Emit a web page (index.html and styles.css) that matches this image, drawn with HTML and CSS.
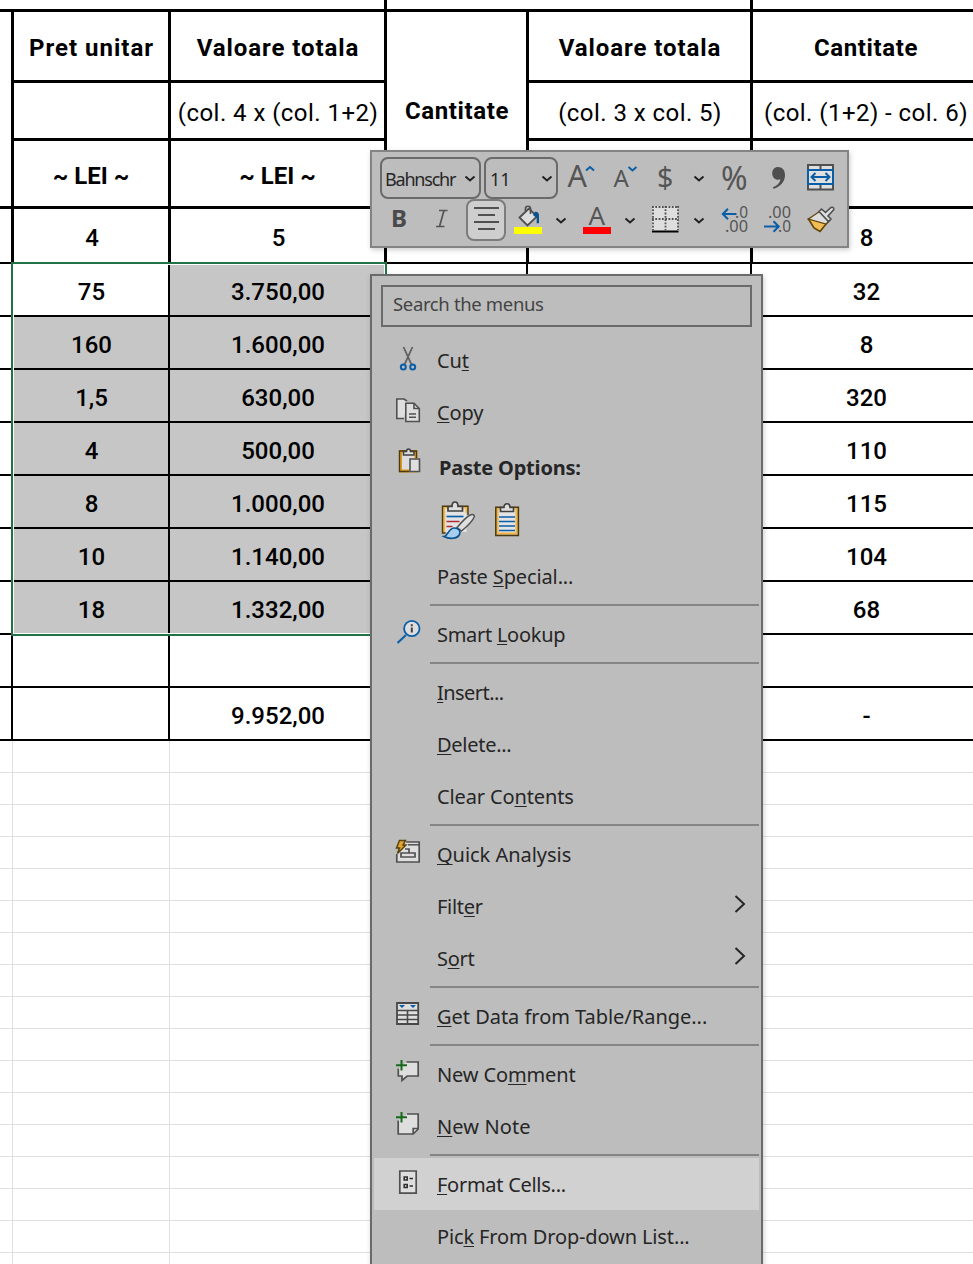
FILE: index.html
```html
<!DOCTYPE html>
<html lang="ro">
<head>
<meta charset="utf-8">
<title>Inventar</title>
<link rel="stylesheet" href="styles.css">
</head>
<body>
<main class="sheet">
  <section class="head">
    <div class="cell span3"></div><div class="cell span2"></div><div class="cell"></div>

    <div class="cell tall"></div>
    <div class="cell bold pret">Pret unitar</div>
    <div class="cell bold">Valoare totala</div>
    <div class="cell bold tall cant">Cantitate</div>
    <div class="cell bold">Valoare totala</div>
    <div class="cell bold cant">Cantitate</div>

    <div class="cell"></div><div class="cell formula">(col. 4 x (col. 1+2)</div><div class="cell formula">(col. 3 x col. 5)</div><div class="cell formula">(col. (1+2) - col. 6)</div>

    <div class="cell lei">~ LEI ~</div><div class="cell lei">~ LEI ~</div><div class="cell"></div><div class="cell"></div>

    <div class="cell thin"></div><div class="cell thin">4</div><div class="cell thin">5</div><div class="cell thin"></div><div class="cell thin"></div><div class="cell thin">8</div>
  </section>
  <section class="body">
    <div class="cell"></div><div class="cell">75</div><div class="cell sel">3.750,00</div><div class="cell"></div><div class="cell"></div><div class="cell">32</div>
    <div class="cell"></div><div class="cell sel">160</div><div class="cell sel">1.600,00</div><div class="cell"></div><div class="cell"></div><div class="cell">8</div>
    <div class="cell"></div><div class="cell sel">1,5</div><div class="cell sel">630,00</div><div class="cell"></div><div class="cell"></div><div class="cell">320</div>
    <div class="cell"></div><div class="cell sel">4</div><div class="cell sel">500,00</div><div class="cell"></div><div class="cell"></div><div class="cell">110</div>
    <div class="cell"></div><div class="cell sel">8</div><div class="cell sel">1.000,00</div><div class="cell"></div><div class="cell"></div><div class="cell">115</div>
    <div class="cell"></div><div class="cell sel">10</div><div class="cell sel">1.140,00</div><div class="cell"></div><div class="cell"></div><div class="cell">104</div>
    <div class="cell"></div><div class="cell sel">18</div><div class="cell sel">1.332,00</div><div class="cell"></div><div class="cell"></div><div class="cell">68</div>
    <div class="cell"></div><div class="cell"></div><div class="cell"></div><div class="cell"></div><div class="cell"></div><div class="cell"></div>
    <div class="cell"></div><div class="cell"></div><div class="cell">9.952,00</div><div class="cell"></div><div class="cell"></div><div class="cell">-</div>
  </section>
  <section class="empty"></section>
  <div class="selection"></div>
</main>

<div class="toolbar">
  <div class="row">
    <div class="combo font"><span>Bahnschr</span><svg class="chev" width="12" height="8" viewBox="0 0 12 8"><path d="M1.500 1.500 6 5.500 10.500 1.500"/></svg></div>
    <div class="combo size"><span>11</span><svg class="chev" width="12" height="8" viewBox="0 0 12 8"><path d="M1.500 1.500 6 5.500 10.500 1.500"/></svg></div>
    <svg width="46" height="42" viewBox="558 157 46 42"><text class="glyph" x="567.500" y="187" font-size="30.500">A</text><path class="blue" d="M586 170.500 590 167l4 3.500"/></svg>
    <svg width="42" height="42" viewBox="604 157 42 42"><text class="glyph" x="613.500" y="187" font-size="24">A</text><path class="blue" d="M628.500 167l4 3.500 4-3.500"/></svg>
    <svg width="40" height="42" viewBox="646 157 40 42"><text class="glyph" x="657" y="188" font-size="28.500">$</text></svg>
    <svg class="chev" width="26" height="42" viewBox="686 157 26 42"><path d="M694.500 176.500l4.500 4 4.500-4"/></svg>
    <svg width="44" height="42" viewBox="712 157 44 42"><text class="glyph" x="721" y="189.500" font-size="32">%</text></svg>
    <svg width="44" height="42" viewBox="756 157 44 42"><path fill="#4f4f4f" d="M778 167c4.300 0 7 3 7 8 0 6.500-4.600 12-11.500 13.800l-.7-1.500c4-1.600 7-4.300 7.700-8.100-4.400 1.700-8.300-1.500-8.300-5.800 0-3.700 2.500-6.400 5.800-6.400z"/></svg>
    <svg width="41" height="42" viewBox="800 157 41 42"><path d="M808 165h25v24.500h-25zM820.500 165v24.500" fill="#dedede" stroke="#505050" stroke-width="2"/><path d="M808 170h25v14h-25z" fill="#e0e0e0" stroke="#0a5ea8" stroke-width="2"/><path class="blue" d="M812 177h17M815.500 173l-4 4 4 4M825.500 173l4 4-4 4"/></svg>
  </div>
  <div class="row">
    <svg width="40" height="42" viewBox="380 199 40 42"><text x="391" y="227" font-size="24" font-weight="700" fill="#4a4a4a">B</text></svg>
    <svg width="46" height="42" viewBox="420 199 46 42"><path d="M439 210.500h8.500M436 226.500h8.500M444 210.500l-4.500 16" fill="none" stroke="#555" stroke-width="1.700"/></svg>
    <div class="align"><i></i><i class="s"></i><i></i><i class="s"></i></div>
    <svg width="44" height="42" viewBox="506 199 44 42"><path d="M519.500 217.500 529 208.500l8 8-9.500 9z" fill="#dedede" stroke="#505050" stroke-width="1.800"/><path d="M525.500 211.500v-3c0-3 5-3 5 0v5.500" fill="none" stroke="#505050" stroke-width="1.700"/><path d="M533 215l2-3.200c2.500-.4 4 1 4 4v7.500h-2.300v-5z" fill="#08528f"/><path fill="#ff0" d="M514 227h28v7h-28z"/></svg>
    <svg class="chev" width="22" height="42" viewBox="550 199 22 42"><path d="M556.500 218.500l4.500 4 4.500-4"/></svg>
    <svg width="48" height="42" viewBox="572 199 48 42"><text class="glyph" x="588.500" y="225" font-size="26">A</text><path fill="red" d="M583 227h28v7h-28z"/></svg>
    <svg class="chev" width="20" height="42" viewBox="620 199 20 42"><path d="M625.500 218.500l4.500 4 4.500-4"/></svg>
    <svg width="50" height="42" viewBox="640 199 50 42"><path fill="#dedede" d="M652 206h26v26h-26z"/><path d="M652 207h27M652 219h27M653 206v24M665.500 206v24M678 206v24" fill="none" stroke="#505050" stroke-width="1.800" stroke-dasharray="1.800 1.500"/><path d="M652 231.500h26.500" stroke="#000" stroke-width="2"/></svg>
    <svg class="chev" width="20" height="42" viewBox="690 199 20 42"><path d="M694.500 218.500l4.500 4 4.500-4"/></svg>
    <svg width="46" height="42" viewBox="710 199 46 42"><text class="num" x="735" y="218" textLength="13" lengthAdjust="spacingAndGlyphs">.0</text><text class="num" x="725" y="232" textLength="23" lengthAdjust="spacingAndGlyphs">.00</text><path class="blue" d="M736.500 214H723M728 208.800l-5.200 5.200 5.200 5.200"/></svg>
    <svg width="44" height="42" viewBox="756 199 44 42"><text class="num" x="768" y="218" textLength="23" lengthAdjust="spacingAndGlyphs">.00</text><text class="num" x="778" y="232" textLength="13" lengthAdjust="spacingAndGlyphs">.0</text><path class="blue" d="M764 226.500h14M773.500 221.300l5.200 5.200-5.200 5.200"/></svg>
    <svg width="41" height="42" viewBox="800 199 41 42"><path d="M808.500 219 814 228l6 3.500 8.500-10.500-6.500-6.500z" fill="#f2bd54" stroke="#604408" stroke-width="1.600"/><path d="M808.500 219 819.500 211.500 829.500 220.500 826 224z" fill="#dedede" stroke="#604408" stroke-width="1.300"/><path d="M819 211.500l2.500-2.500 4 3.500 5.500-5c2-1 3.500 1 2.500 2.500l-5.500 6 3 3-2.500 2.500z" fill="#dedede" stroke="#505050" stroke-width="1.600"/></svg>
  </div>
</div>

<div class="menu">
  <div class="search">Search the menus</div>
  <div class="item"><svg width="56" height="52" viewBox="374 334 56 52"><path d="M403.500 347l8 17.500M412.500 347l-8 17.500" stroke="#606060" stroke-width="1.800"/><g fill="none" stroke="#0a5ea8" stroke-width="2"><circle cx="403.300" cy="367" r="2.500"/><circle cx="412.700" cy="367" r="2.500"/></g></svg><span>Cu<u>t</u></span></div>
  <div class="item"><svg width="56" height="52" viewBox="374 386 56 52"><g fill="#dedede" stroke="#505050" stroke-width="1.600"><path d="M404 418.500h-7.200V399H404l3 2"/><path d="M405.800 403.200h8.200l5.300 5.300v13h-13.500z"/><path d="M414 403.200v5.300h5.300M409 414h7M409 417.200h7" fill="none"/></g></svg><span><u>C</u>opy</span></div>
  <div class="item title"><svg width="56" height="58" viewBox="374 438 56 58"><path d="M400.500 451.500h15.500v19.500h-15.500z" fill="#dedede" stroke="#d99b24" stroke-width="3"/><path d="M409 471.500h-9.500V451h17v7" fill="none" stroke="#4b390f" stroke-width="1.400"/><path d="M403.500 455v-3.500h3c0-3.500 4-3.500 4 0h3.500v3.500z" fill="#dedede" stroke="#404040" stroke-width="1.500"/><path d="M410 459h9.500v12.500H410z" fill="#dedede" stroke="#505050" stroke-width="1.600"/></svg><span>Paste Options:</span></div>
  <div class="pastes">
    <svg width="36" height="54" viewBox="440 496 36 54"><path d="M444 507.500h22.500V532H444z" fill="#e3e3e3"/><path d="M466.500 513v-5.500H444V533" fill="none" stroke="#f2b544" stroke-width="2.200"/><path d="M468 515v-8.800h-25.500V533h3" fill="none" stroke="#4b390f" stroke-width="1.400"/><path d="M448 511v-4.500h4c0-6 6-6 6 0h4.500v4.500z" fill="#dedede" stroke="#404040" stroke-width="1.700"/><path d="M446.500 516.500h17" stroke="#0a5ea8" stroke-width="1.700"/><path d="M446.500 521.500h13M446.500 526.500h6" stroke="#b12a34" stroke-width="1.700"/><path d="M457 527.500c5-6 10-11.500 14-12.800 2.500-.8 4 .8 3 2.800-2 4-7 9-12.500 13.500z" fill="#dedede" stroke="#505050" stroke-width="1.500"/><path d="M444 536.500c4.500-.5 4-8 10-8.500 4.500-.3 7 3 5.500 6.500-2.500 4.500-10 5-15.500 2z" fill="#a9cff0" stroke="#08528f" stroke-width="1.600"/></svg>
    <svg width="26" height="54" viewBox="494 496 26 54"><path d="M497.500 508.500h19v25h-19z" fill="#e3e3e3" stroke="#f2b544" stroke-width="2.200"/><path d="M495.800 507.200h22.600v28.200h-22.600z" fill="none" stroke="#4b390f" stroke-width="1.500"/><path d="M500.500 511.500v-4h3.500c0-5 6-5 6 0h3.500v4z" fill="#dedede" stroke="#404040" stroke-width="1.600"/><path d="M499 517h16M499 521.500h16M499 526h16M499 530.500h16" stroke="#0a5ea8" stroke-width="1.600"/></svg>
  </div>
  <div class="item noicon"><span>Paste <u>S</u>pecial...</span></div>
  <div class="sep"></div>
  <div class="item"><svg width="56" height="52" viewBox="374 608 56 52"><path d="M406 635l-8.500 8" stroke="#0a5ea8" stroke-width="2"/><circle cx="411.800" cy="628.500" r="7.700" fill="#dedede" stroke="#0a5ea8" stroke-width="1.800"/><path d="M411.800 624.300v2M411.800 627.500v5" stroke="#404040" stroke-width="2"/></svg><span class="tight">Smart <u>L</u>ookup</span></div>
  <div class="sep"></div>
  <div class="item noicon"><span class="tighter"><u>I</u>nsert...</span></div>
  <div class="item noicon"><span class="tight"><u>D</u>elete...</span></div>
  <div class="item noicon"><span>Clear Co<u>n</u>tents</span></div>
  <div class="sep"></div>
  <div class="item"><svg width="56" height="52" viewBox="374 828 56 52"><path d="M396.800 854v8h22.400v-20h-13" fill="#dedede" stroke="#505050" stroke-width="1.700"/><path d="M408 844.800h11" stroke="#505050" stroke-width="1.500"/><path d="M401 853h14v4h-14zM405 849h4v4" fill="#dedede" stroke="#505050" stroke-width="1.700"/><path d="M399.500 840.500h6l-2.500 4.500h3l-8.500 8.500 2-5.500h-3z" fill="#e2a52d" stroke="#5a430d" stroke-width="1.500"/></svg><span class="wide"><u>Q</u>uick Analysis</span></div>
  <div class="item noicon"><span class="tight">Filt<u>e</u>r</span><svg class="arrow" width="12" height="18" viewBox="0 0 12 18"><path d="M1.500 1 10 9l-8.500 8"/></svg></div>
  <div class="item noicon"><span class="tight">S<u>o</u>rt</span><svg class="arrow" width="12" height="18" viewBox="0 0 12 18"><path d="M1.500 1 10 9l-8.500 8"/></svg></div>
  <div class="sep"></div>
  <div class="item"><svg width="56" height="52" viewBox="374 990 56 52"><path d="M397 1003h21.200v21H397z" fill="#dedede" stroke="#484848" stroke-width="1.800"/><path d="M397 1010.500h21M397 1015h21M397 1019.500h21M407.500 1010.500V1024" stroke="#484848" stroke-width="1.600"/><path d="M399 1005h6l-3 3zM410 1005h6l-3 3z" fill="#0a5ea8"/></svg><span class="wide"><u>G</u>et Data from Table/Range...</span></div>
  <div class="sep"></div>
  <div class="item"><svg width="56" height="52" viewBox="374 1048 56 52"><path d="M406.500 1062h11.700v14h-11l-5.200 4.500V1076h-3.700v-7.500" fill="#dedede" stroke="#505050" stroke-width="1.700"/><path d="M396 1065.200h11M401.500 1060v10.500" stroke="#16691c" stroke-width="2"/></svg><span>New Co<u>m</u>ment</span></div>
  <div class="item"><svg width="56" height="52" viewBox="374 1100 56 52"><path d="M407 1114h11.200v15l-5 5h-15v-13.500z" fill="#dedede"/><path d="M407 1114h11.200v15l-5 5h-15v-13.500M418.200 1128.500h-5v5.500" fill="none" stroke="#505050" stroke-width="1.700"/><path d="M396 1117.200h11M401.500 1112v10.500" stroke="#16691c" stroke-width="2"/></svg><span class="looser"><u>N</u>ew Note</span></div>
  <div class="sep"></div>
  <div class="item hot"><svg width="56" height="52" viewBox="374 1158 56 52"><path d="M399.800 1171h16.400v22.200h-16.400z" fill="#dedede" stroke="#505050" stroke-width="1.700"/><path d="M404.200 1177h3v3h-3zM404.200 1184.500h3v3h-3zM409.500 1178.500h3.500M409.500 1186h3.500" fill="none" stroke="#303030" stroke-width="1.600"/></svg><span class="tight"><u>F</u>ormat Cells...</span></div>
  <div class="item noicon"><span>Pic<u>k</u> From Drop-down List...</span></div>
</div>
</body>
</html>
```
FILE: styles.css
```css
* { box-sizing: border-box; }
body {
  margin: 0;
  width: 973px;
  height: 1264px;
  overflow: hidden;
  position: relative;
  background: #fff;
  color: #000;
  font-family: Roboto, "Liberation Sans", sans-serif;
  font-size: 24px;
}
svg { display: block; flex: none; overflow: visible; }

/* spreadsheet */
.sheet { position: relative; width: 981px; }
.head {
  display: grid;
  grid-template-columns: 14px 157px 216px 142px 224px 228px;
  grid-template-rows: 12px 71px 58px 68px 55px;
}
.body {
  display: grid;
  grid-template-columns: 13px 157px 216px 142px 224px 229px;
  grid-auto-rows: 53px;
}
.cell {
  display: flex;
  align-items: center;
  justify-content: center;
  padding: 4px 0 0 2px;
  min-width: 0;
  white-space: nowrap;
  border: 0 solid #000;
  font-weight: 500;
  letter-spacing: 0;
}
.head .cell { border-width: 0 3px 3px 0; }
.head .thin { border-bottom-width: 2px; }
.body .cell { border-width: 0 2px 2px 0; }
.head .bold { font-weight: 700; letter-spacing: 0.9px; padding: 3px 0 0 1px; }
.head .pret { letter-spacing: 1px; }
.head .cant { letter-spacing: 0.6px; }
.head .lei { font-weight: 700; padding-left: 0; }
.head .formula { font-weight: 400; letter-spacing: 0.45px; padding-left: 1px; }
.span3 { grid-column: span 3; }
.span2 { grid-column: span 2; }
.tall { grid-row: span 3; }
.sel { background: #c6c6c6; }
.empty {
  height: 523px;
  background:
    linear-gradient(90deg, transparent 12px, #e0e0e0 12px 13px, transparent 13px 169px, #e0e0e0 169px 170px, transparent 170px),
    repeating-linear-gradient(180deg, transparent 0 31px, #e0e0e0 31px 32px);
}
.selection {
  position: absolute;
  left: 11px;
  top: 262px;
  width: 376px;
  height: 374px;
  border: 2px solid #217346;
  box-shadow: inset 0 0 0 1px #fff;
}

/* floating format toolbar */
.toolbar {
  position: absolute;
  left: 370px;
  top: 150px;
  width: 479px;
  height: 98px;
  padding: 5px 8px;
  border: 2px solid #838383;
  background: #bdbdbd;
  box-shadow: 1px 2px 5px rgba(0, 0, 0, .2);
  font-family: "Noto Sans", "Open Sans", sans-serif;
}
.row { display: flex; height: 42px; }
.combo {
  display: flex;
  flex: none;
  align-items: center;
  justify-content: space-between;
  height: 42px;
  padding: 2px 3px 0 3px;
  border: 2px solid #6a6a6a;
  border-radius: 8px;
  font-size: 18px;
  color: #262626;
}
.font { width: 101px; margin-right: 3px; letter-spacing: -1.2px; }
.size { width: 74px; padding-left: 4px; }
.chev path { fill: none; stroke: #222; stroke-width: 2; }
.glyph { fill: #555; font-weight: 400; }
.num { fill: #555; font-size: 16px; }
.blue { fill: none; stroke: #0a5ea8; stroke-width: 2; }
.align {
  flex: none;
  width: 40px;
  height: 42px;
  display: flex;
  flex-direction: column;
  align-items: center;
  gap: 5px;
  padding-top: 6px;
  border: 2px solid #7c7c7c;
  border-radius: 8px;
  background: #cecece;
}
.align i { width: 25px; height: 2px; background: #505050; }
.align .s { width: 17px; }

/* context menu */
.menu {
  position: absolute;
  left: 370px;
  top: 274px;
  width: 393px;
  height: 1000px;
  padding: 9px 2px 0;
  border: 2px solid #6a6a6a;
  background: #bdbdbd;
  box-shadow: 1px 2px 5px rgba(0, 0, 0, .2);
  font-family: "Noto Sans", "Open Sans", sans-serif;
  font-size: 20px;
  color: #262626;
}
.search {
  width: 371px;
  height: 42px;
  margin: 0 0 7px 7px;
  padding-left: 10px;
  border: 2px solid #6a6a6a;
  font-size: 18.5px;
  letter-spacing: -0.35px;
  line-height: 34px;
  color: #444;
}
.item { display: flex; align-items: center; height: 52px; width: 385px; white-space: nowrap; }
.item span { margin-left: 7px; letter-spacing: -0.13px; }
.item .tight { letter-spacing: -0.28px; }
.item .tighter { letter-spacing: -0.55px; }
.item .wide { letter-spacing: -0.03px; }
.item .looser { letter-spacing: 0.12px; }
.noicon { padding-left: 56px; }
.title { height: 58px; font-weight: 700; }
.item.title span { margin-left: 9px; letter-spacing: -0.2px; }
.hot { background: #d1d1d1; }
.item u { text-decoration: underline; text-decoration-thickness: 1px; text-underline-offset: 2px; text-decoration-skip-ink: none; }
.pastes { display: flex; gap: 18px; height: 54px; padding-left: 66px; }
.sep { height: 2px; margin: 2px 0 2px 56px; width: 329px; background: #858585; }
.arrow { margin: -5px 13px 0 auto; }
.arrow path { fill: none; stroke: #262626; stroke-width: 2; }
```
